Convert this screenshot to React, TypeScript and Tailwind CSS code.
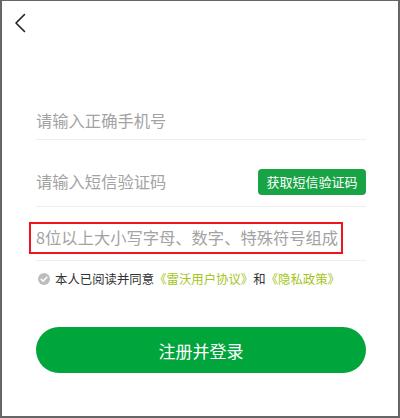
const fontStack = '"Noto Sans CJK SC", "Noto Sans", sans-serif'

function BackIcon() {
  return (
    <svg width="12" height="20" viewBox="0 0 12 20" fill="none">
      <path d="M10.5 1.5 L2 10 L10.5 18.5" stroke="#222" strokeWidth="1.6" strokeLinecap="round" strokeLinejoin="round" />
    </svg>
  )
}

function CheckDot() {
  return (
    <svg width="12" height="12" viewBox="0 0 12 12">
      <circle cx="6" cy="6" r="6" fill="#bdbdbd" />
      <path d="M3.2 6.2 L5.2 8.1 L8.9 4.2" stroke="#fff" strokeWidth="1.5" fill="none" strokeLinecap="round" strokeLinejoin="round" />
    </svg>
  )
}

export default function App() {
  return (
    <div
      className="w-[400px] h-[418px] overflow-hidden bg-white border-t border-x-2 border-b-2 border-[#666] flex flex-col"
      style={{ fontFamily: fontStack }}
    >
      <header className="h-[101px] pl-[12px] pt-[12px]">
        <BackIcon />
      </header>

      <div className="pl-[34px] pr-[32px] flex flex-col">
        <div className="h-[38px] flex items-center border-b border-[#eeeeee]">
          <span className="text-[16.3px] text-[#a3a3a3] leading-none">请输入正确手机号</span>
        </div>

        <div className="mt-[17px] h-[50px] flex items-center justify-between border-b border-[#eeeeee]">
          <span className="text-[16.3px] text-[#a3a3a3] leading-none">请输入短信验证码</span>
          <button
            type="button"
            className="h-[26px] w-[108px] rounded-[4px] bg-[#18a445] text-white text-[13px] leading-none flex items-center justify-center"
          >
            获取短信验证码
          </button>
        </div>

        <div className="mt-[8px] h-[46px] flex items-center border-b border-[#eeeeee]">
          <span className="-ml-[7px] h-[32px] pl-[5px] pr-[3px] border-2 border-[#f0141e] flex items-center text-[16.3px] text-[#a3a3a3] leading-none">
            8位以上大小写字母、数字、特殊符号组成
          </span>
        </div>

        <div className="mt-[11px] h-[14px] flex items-center gap-[5px] pl-[2px] text-[12.4px] leading-none text-[#333]">
          <CheckDot />
          <span>
            本人已阅读并同意<span className="text-[#a3c51c]">《雷沃用户协议》</span>和
            <span className="text-[#a3c51c]">《隐私政策》</span>
          </span>
        </div>

        <button
          type="button"
          className="mt-[41px] h-[46px] w-full rounded-full bg-[#00a53b] text-white text-[17px] leading-none flex items-center justify-center"
        >
          注册并登录
        </button>
      </div>
    </div>
  )
}
